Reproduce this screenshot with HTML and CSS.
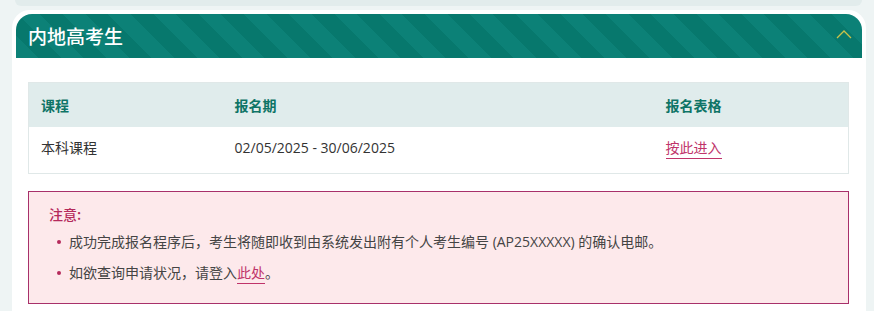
FILE: index.html
```html
<!DOCTYPE html>
<html lang="zh">
<head>
<meta charset="utf-8">
<link rel="stylesheet" href="styles.css">
</head>
<body>
<div class="top-card"></div>
<section class="card">
  <header class="card-head">
    <h2 class="card-title">内地高考生</h2>
    <svg class="chev" width="16" height="10" viewBox="0 0 16 10"><path d="M1 9 L8 2 L15 9" fill="none" stroke="#c9c24a" stroke-width="1.3"/></svg>
  </header>
  <div class="card-body">
    <table class="tbl">
      <thead>
        <tr><th class="c1">课程</th><th class="c2">报名期</th><th class="c3">报名表格</th></tr>
      </thead>
      <tbody>
        <tr><td>本科课程</td><td class="date">02/05/2025 - 30/06/2025</td><td><a class="link" href="#">按此进入</a></td></tr>
      </tbody>
    </table>
    <div class="notice">
      <div class="notice-title">注意:</div>
      <ul class="notice-list">
        <li>成功完成报名程序后，考生将随即收到由系统发出附有个人考生编号 (AP25XXXXX) 的确认电邮。</li>
        <li>如欲查询申请状况，请登入<a class="link" href="#">此处</a>。</li>
      </ul>
    </div>
  </div>
</section>
</body>
</html>
```
FILE: styles.css
```css
* { box-sizing: border-box; }
body {
  margin: 0;
  background: #eef4f4;
  font-family: "Open Sans", "Noto Sans CJK SC", sans-serif;
  font-size: 14px;
  color: #333;
}
.top-card {
  height: 6px;
  margin: 0 12px 0 15px;
  background: #e2ecec;
  border-radius: 0 0 14px 14px;
}
.card {
  margin: 4px 8px 0 12px;
  background: #fff;
  border-radius: 18px 18px 0 0;
  padding: 4px 4px 0 4px;
  height: 301px;
}
.card-head {
  height: 44px;
  border-radius: 16px 16px 0 0;
  background: repeating-linear-gradient(45deg, #0c8177 0 16px, #07786d 16px 32px);
  display: flex;
  align-items: center;
  justify-content: space-between;
  padding: 0 10px 0 12px;
}
.card-title {
  margin: 0 0 2px 0;
  color: #fff;
  font-family: "Noto Sans CJK SC", sans-serif;
  font-size: 19px;
  font-weight: 500;
}
.chev { margin-top: -4px; }
.card-body {
  padding: 24px 13px 0 12px;
}
.tbl {
  width: 100%;
  border-collapse: collapse;
  border: 1px solid #e0e8e8;
}
.tbl th {
  background: #e0ecec;
  color: #0e7466;
  font-family: "Noto Sans CJK SC", sans-serif;
  font-weight: 700;
  font-size: 14px;
  text-align: left;
  height: 44px;
  padding: 0 12px;
}
.tbl td {
  height: 47px;
  padding: 0 12px 3px 12px;
  color: #333;
  line-height: 20px;
}
.c1 { width: 194px; }
.c2 { width: 431px; }
.date { color: #5a5a5a; }
.link {
  color: #c0336a;
  text-decoration: none;
  border-bottom: 1px solid #c0336a;
  padding-bottom: 1px;
}
.notice {
  margin-top: 17px;
  background: #fde9eb;
  border: 1px solid #a8306a;
  padding: 12px 20px 14px 20px;
  height: 113px;
}
.notice-title {
  color: #b52a5b;
  font-family: "Noto Sans CJK SC", sans-serif;
  font-weight: 500;
  line-height: 20px;
}
.notice-list {
  list-style: none;
  margin: 8px 0 0 0;
  padding: 0 0 0 20px;
  color: #444;
}
.notice-list li {
  position: relative;
  line-height: 20px;
  margin-bottom: 11px;
}
.notice-list li::before {
  content: "";
  position: absolute;
  left: -12px;
  top: 8px;
  width: 4px;
  height: 4px;
  border-radius: 50%;
  background: #b52a5b;
}
```
